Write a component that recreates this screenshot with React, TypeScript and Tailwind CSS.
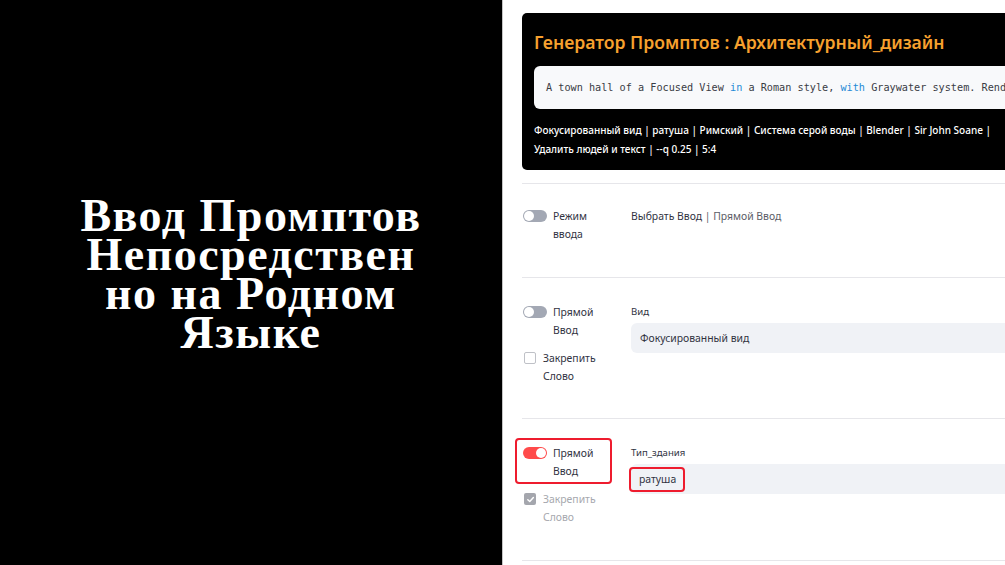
import React from "react";

const ui = { fontFamily: '"Noto Sans", "Open Sans", sans-serif' };
const mono = { fontFamily: '"DejaVu Sans Mono", "Liberation Mono", monospace' };
const serif = { fontFamily: '"Liberation Serif", "DejaVu Serif", serif' };

function Toggle({ on }: { on?: boolean }) {
  return (
    <div
      className={
        "relative mt-[3px] h-[12px] w-[24px] shrink-0 rounded-full " +
        (on ? "bg-[#ff4b4b]" : "bg-[#a3a8b4]")
      }
    >
      <div
        className={
          "absolute top-[1px] h-[10px] w-[10px] rounded-full bg-white " +
          (on ? "right-[1px]" : "left-[1px]")
        }
      />
    </div>
  );
}

function Checkbox({ checked }: { checked?: boolean }) {
  if (checked) {
    return (
      <div className="mt-[3px] flex h-[12px] w-[12px] shrink-0 items-center justify-center rounded-[2px] bg-[#a4a6ad]">
        <svg width="9" height="9" viewBox="0 0 10 10" fill="none">
          <path d="M2 5.2 L4.2 7.3 L8.2 2.8" stroke="white" strokeWidth="1.6" strokeLinecap="round" strokeLinejoin="round" />
        </svg>
      </div>
    );
  }
  return <div className="mt-[3px] h-[12px] w-[12px] shrink-0 rounded-[2px] border border-[#bfc1c7] bg-white" />;
}

function Divider() {
  return <div className="h-px w-full bg-[#e6e6ea]" />;
}

export default function App() {
  return (
    <div className="flex h-[565px] w-[1005px] overflow-hidden bg-white" style={ui}>
      <div className="flex w-[502px] shrink-0 items-center justify-center bg-black pb-[18px]">
        <h1
          className="text-center text-[46px] font-bold leading-[39px] tracking-[1.5px] text-white"
          style={serif}
        >
          Ввод Промптов
          <br />
          Непосредствен
          <br />
          но на Родном
          <br />
          Языке
        </h1>
      </div>
      <div className="w-[503px] shrink-0 overflow-hidden border-l border-[#c4c4c4] pl-[19px] pt-[13px]">
        <div className="w-[720px]">
          {/* Card */}
          <div className="rounded-[5px] bg-black px-[12px] pb-[11px] pt-[16px]">
            <div className="text-[17.6px] font-semibold leading-[26px] text-[#f7a12e]">
              Генератор Промптов : Архитектурный_дизайн
            </div>
            <div
              className="mt-[11px] flex h-[43px] items-center rounded-[6px] bg-[#f8f9fb] px-[12px] text-[10.2px] text-[#3a3c45]"
              style={mono}
            >
              <span className="whitespace-pre">
                A town hall of a Focused View <span className="text-[#1f8ad6]">in</span> a Roman style,{" "}
                <span className="text-[#1f8ad6]">with</span> Graywater system. Render
              </span>
            </div>
            <div className="mt-[12px] whitespace-nowrap text-[10px] font-medium leading-[19px] text-white">
              Фокусированный вид | ратуша | Римский | Система серой воды | Blender | Sir John Soane |
              <br />
              Удалить людей и текст | --q 0.25 | 5:4
            </div>
          </div>

          <div className="mt-[13px]">
            <Divider />
          </div>

          {/* Row 1 */}
          <div className="grid grid-cols-[109px_1fr] pb-[34px] pt-[23px] text-[10.4px] leading-[18px] text-[#31333f]">
            <div className="flex gap-[6px] pl-[1px]">
              <Toggle />
              <div>
                Режим
                <br />
                ввода
              </div>
            </div>
            <div>
              Выбрать Ввод <span className="text-[#5b5d66]">| Прямой Ввод</span>
            </div>
          </div>
          <Divider />

          {/* Row 2 */}
          <div className="grid grid-cols-[109px_1fr] pb-[33px] pt-[25px] text-[10.4px] leading-[18px] text-[#31333f]">
            <div className="flex flex-col gap-[10px]">
              <div className="flex gap-[6px] pl-[1px]">
                <Toggle />
                <div>
                  Прямой
                  <br />
                  Ввод
                </div>
              </div>
              <div className="flex gap-[7px] pl-[2px]">
                <Checkbox />
                <div>
                  Закрепить
                  <br />
                  Слово
                </div>
              </div>
            </div>
            <div>
              <div className="text-[9.6px] leading-[18px]">Вид</div>
              <div className="mt-[2px] flex h-[30px] items-center rounded-[6px] bg-[#f0f2f6] pl-[9px]">
                Фокусированный вид
              </div>
            </div>
          </div>
          <Divider />

          {/* Row 3 */}
          <div className="grid grid-cols-[109px_1fr] pb-[34px] pt-[25px] text-[10.4px] leading-[18px] text-[#31333f]">
            <div className="flex flex-col gap-[10px]">
              <div className="relative flex gap-[6px] pl-[1px]">
                <Toggle on />
                <div>
                  Прямой
                  <br />
                  Ввод
                </div>
                <div className="pointer-events-none absolute left-[-7px] top-[-6px] h-[46px] w-[97px] rounded-[4px] border-[2.5px] border-[#ee1c2e]" />
              </div>
              <div className="flex gap-[7px] pl-[2px] text-[#a6a8ae]">
                <Checkbox checked />
                <div>
                  Закрепить
                  <br />
                  Слово
                </div>
              </div>
            </div>
            <div>
              <div className="text-[9.6px] leading-[18px]">Тип_здания</div>
              <div className="relative mt-[2px] flex h-[30px] items-center rounded-[6px] bg-[#f0f2f6] pl-[8px]">
                ратуша
                <div className="pointer-events-none absolute left-[-2px] top-[3px] h-[25px] w-[56px] rounded-[4px] border-[2.5px] border-[#ee1c2e]" />
              </div>
            </div>
          </div>
          <Divider />
        </div>
      </div>
    </div>
  );
}
